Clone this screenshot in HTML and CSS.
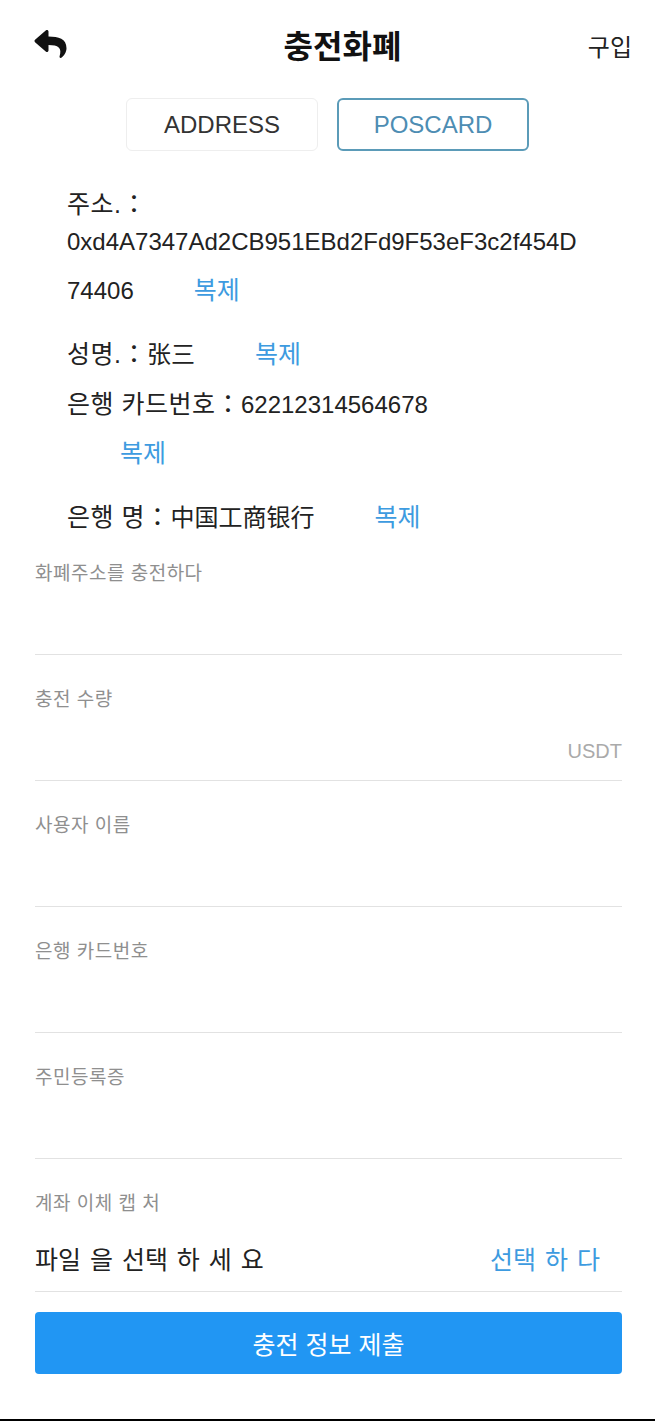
FILE: index.html
```html
<!DOCTYPE html>
<html lang="ko">

<head>
    <meta charset="UTF-8">
    <meta name="viewport" content="width=device-width, initial-scale=1.0">
    <title>충전화폐</title>
    <link rel="stylesheet" href="styles.css">
</head>

<body>
    <div class="page">

        <!-- Top bar -->
        <div class="topbar">
            <div class="topbar-left">
                <svg class="back-icon" viewBox="0 0 512 512">
                    <path d="M8.3 189.8L184.3 37.9C199.7 24.5 224 35.3 224 56v80.1c160.6 1.8 288 34 288 186.3 0 61.4-39.6 122.3-83.3 154.1-13.7 9.9-33.1-2.5-28.1-18.6 45.3-145-21.5-183.5-176.6-185.7V360c0 20.7-24.3 31.5-39.7 18.2l-176-152c-11.1-9.6-11.1-26.8 0-36.4z" />
                </svg>
            </div>
            <div class="topbar-title">충전화폐</div>
            <div class="topbar-right">구입</div>
        </div>

        <!-- Tabs -->
        <div class="tabs">
            <div class="tab">ADDRESS</div>
            <div class="tab active">POSCARD</div>
        </div>

        <!-- Receiving account -->
        <div class="info">
            <div class="info-title"><span class="key">주소.：</span></div>
            <div class="info-address">
                <span class="line">0xd4A7347Ad2CB951EBd2Fd9F53eF3c2f454D</span>
                <span class="line">74406<a class="copy">복제</a></span>
            </div>
            <div class="info-row row-name"><span class="key">성명.：</span>张三<a class="copy">복제</a></div>
            <div class="info-row row-card"><span class="key">은행 카드번호：</span>62212314564678</div>
            <div class="info-row row-card-copy"><a class="copy">복제</a></div>
            <div class="info-row row-bank"><span class="key">은행 명：</span>中国工商银行<a class="copy">복제</a></div>
        </div>

        <!-- Form -->
        <div class="form">
            <div class="field">
                <label>화폐주소를 충전하다</label>
                <div class="field-input"></div>
            </div>
            <div class="field">
                <label>충전 수량</label>
                <div class="field-input"><span class="unit">USDT</span></div>
            </div>
            <div class="field">
                <label>사용자 이름</label>
                <div class="field-input"></div>
            </div>
            <div class="field">
                <label>은행 카드번호</label>
                <div class="field-input"></div>
            </div>
            <div class="field">
                <label>주민등록증</label>
                <div class="field-input"></div>
            </div>
            <div class="field">
                <label>계좌 이체 캡 처</label>
                <div class="file-row">
                    <span class="file-text">파일 을 선택 하 세 요</span>
                    <span class="file-pick">선택 하 다</span>
                </div>
            </div>

            <button class="submit-btn">충전 정보 제출</button>
        </div>

    </div>
</body>

</html>
```

FILE: styles.css
```css
* {
    margin: 0;
    padding: 0;
    box-sizing: border-box;
}

body {
    font-family: "Liberation Sans", "Noto Sans CJK KR", sans-serif;
    background-color: #fff;
    color: #222;
}

.page {
    min-height: 100vh;
    border-bottom: 2px solid #000;
}

/* Top bar */
.topbar {
    display: flex;
    align-items: center;
    height: 88px;
    padding: 0 23px 0 32px;
}

.topbar-left {
    width: 71px;
    display: flex;
    align-items: center;
}

.back-icon {
    width: 37px;
    height: 32px;
    fill: #111;
}

.topbar-title {
    flex: 1;
    text-align: center;
    font-size: 32px;
    font-weight: 700;
    color: #111;
}

.topbar-right {
    width: 50px;
    font-size: 24px;
    text-align: right;
    padding-top: 2px;
}

/* Tabs */
.tabs {
    display: flex;
    justify-content: center;
    gap: 19px;
    margin-top: 10px;
}

.tab {
    width: 192px;
    height: 53px;
    line-height: 51px;
    text-align: center;
    font-size: 24px;
    color: #333;
    border: 1px solid #eee;
    border-radius: 6px;
}

.tab.active {
    color: #4d8db3;
    border: 2px solid #5b9bb8;
    line-height: 49px;
}

/* Account info */
.info {
    padding: 39px 0 0 67px;
    font-size: 24px;
    color: #222;
}

.info .key {
    font-size: 25px;
    letter-spacing: 0.5px;
}

.info-title {
    height: 28px;
    line-height: 28px;
}

.info-address .line {
    display: block;
    height: 48px;
    line-height: 48px;
}

.info-row {
    height: 30px;
    line-height: 30px;
}

.row-name {
    margin-top: 25px;
}

.row-card {
    margin-top: 20px;
}

.row-card-copy {
    margin-top: 19px;
    padding-left: 53px;
}

.row-bank {
    margin-top: 37px;
    height: 24px;
    line-height: 24px;
}

.copy {
    font-size: 25px;
    color: #3d9be0;
    margin-left: 60px;
    cursor: pointer;
}

.row-card-copy .copy {
    margin-left: 0;
}

/* Form */
.form {
    padding: 0 33px 0 35px;
}

.field {
    padding-top: 34px;
    border-bottom: 1px solid #e2e2e2;
}

.field label {
    display: block;
    height: 22px;
    line-height: 22px;
    font-size: 19px;
    letter-spacing: 0.5px;
    color: #8f8f8f;
}

.field-input {
    height: 69px;
    display: flex;
    align-items: center;
    justify-content: flex-end;
    padding-top: 12px;
}

.unit {
    font-size: 20px;
    color: #aaa;
}

.file-row {
    display: flex;
    justify-content: space-between;
    align-items: center;
    height: 44px;
    margin: 21px 0 11px;
    font-size: 25px;
    word-spacing: 2px;
}

.file-text {
    color: #222;
}

.file-pick {
    color: #3d9be0;
    padding-right: 22px;
}

.submit-btn {
    display: block;
    width: 100%;
    height: 62px;
    margin-top: 20px;
    background-color: #2196f3;
    color: #fff;
    border: none;
    border-radius: 4px;
    font-family: inherit;
    font-size: 25px;
    cursor: pointer;
}
```
